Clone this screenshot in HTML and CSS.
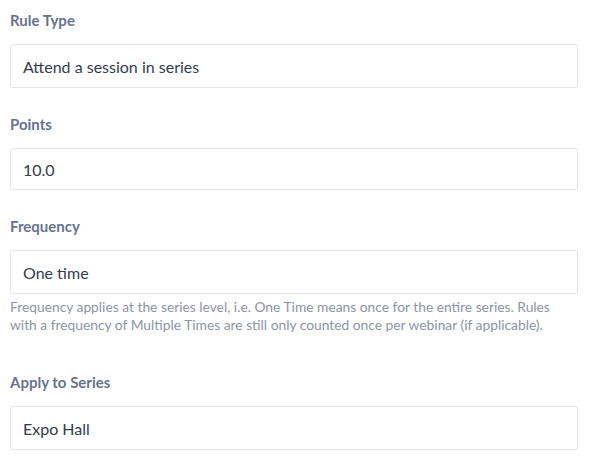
FILE: index.html
```html
<!DOCTYPE html>
<html lang="en">
  <head>
    <meta charset="UTF-8" />
    <meta name="viewport" content="width=device-width, initial-scale=1.0" />
    <title>Rule Settings</title>

    <link rel="stylesheet" href="styles.css">
  </head>

  <body>
    <form class="ruleForm">
      <!-- Rule type -->
      <div class="field">
        <label class="fieldLabel">Rule Type</label>
        <div class="fieldBox">Attend a session in series</div>
      </div>

      <!-- Points -->
      <div class="field">
        <label class="fieldLabel">Points</label>
        <div class="fieldBox short">10.0</div>
      </div>

      <!-- Frequency -->
      <div class="field withHelp">
        <label class="fieldLabel">Frequency</label>
        <div class="fieldBox">One time</div>
        <p class="helpText">
          Frequency applies at the series level, i.e. One Time means once for the entire series. Rules<br />
          with a frequency of Multiple Times are still only counted once per webinar (if applicable).
        </p>
      </div>

      <!-- Series -->
      <div class="field">
        <label class="fieldLabel">Apply to Series</label>
        <div class="fieldBox">Expo Hall</div>
      </div>
    </form>
  </body>
</html>
```

FILE: styles.css
```css
body {
  margin: 0;
  background-color: #ffffff;
  font-family: Lato, "Noto Sans", sans-serif;
}

.ruleForm {
  width: 568px;
  padding: 10px 0 0 10px;
}

.field {
  margin-bottom: 26px;
}

.fieldLabel {
  display: block;
  font-size: 15px;
  font-weight: 700;
  line-height: 20px;
  color: #67738f;
  margin-bottom: 14px;
}

.fieldBox {
  height: 44px;
  box-sizing: border-box;
  border: 1px solid #e3e5ea;
  border-radius: 3px;
  padding: 0 12px;
  display: flex;
  align-items: center;
  font-size: 16px;
  color: #333c4e;
}

.fieldBox.short {
  height: 42px;
}

.helpText {
  margin: 4px 0 0 0;
  font-size: 13.8px;
  line-height: 18px;
  color: #8c95a8;
}

.withHelp {
  margin-bottom: 38px;
}
```
